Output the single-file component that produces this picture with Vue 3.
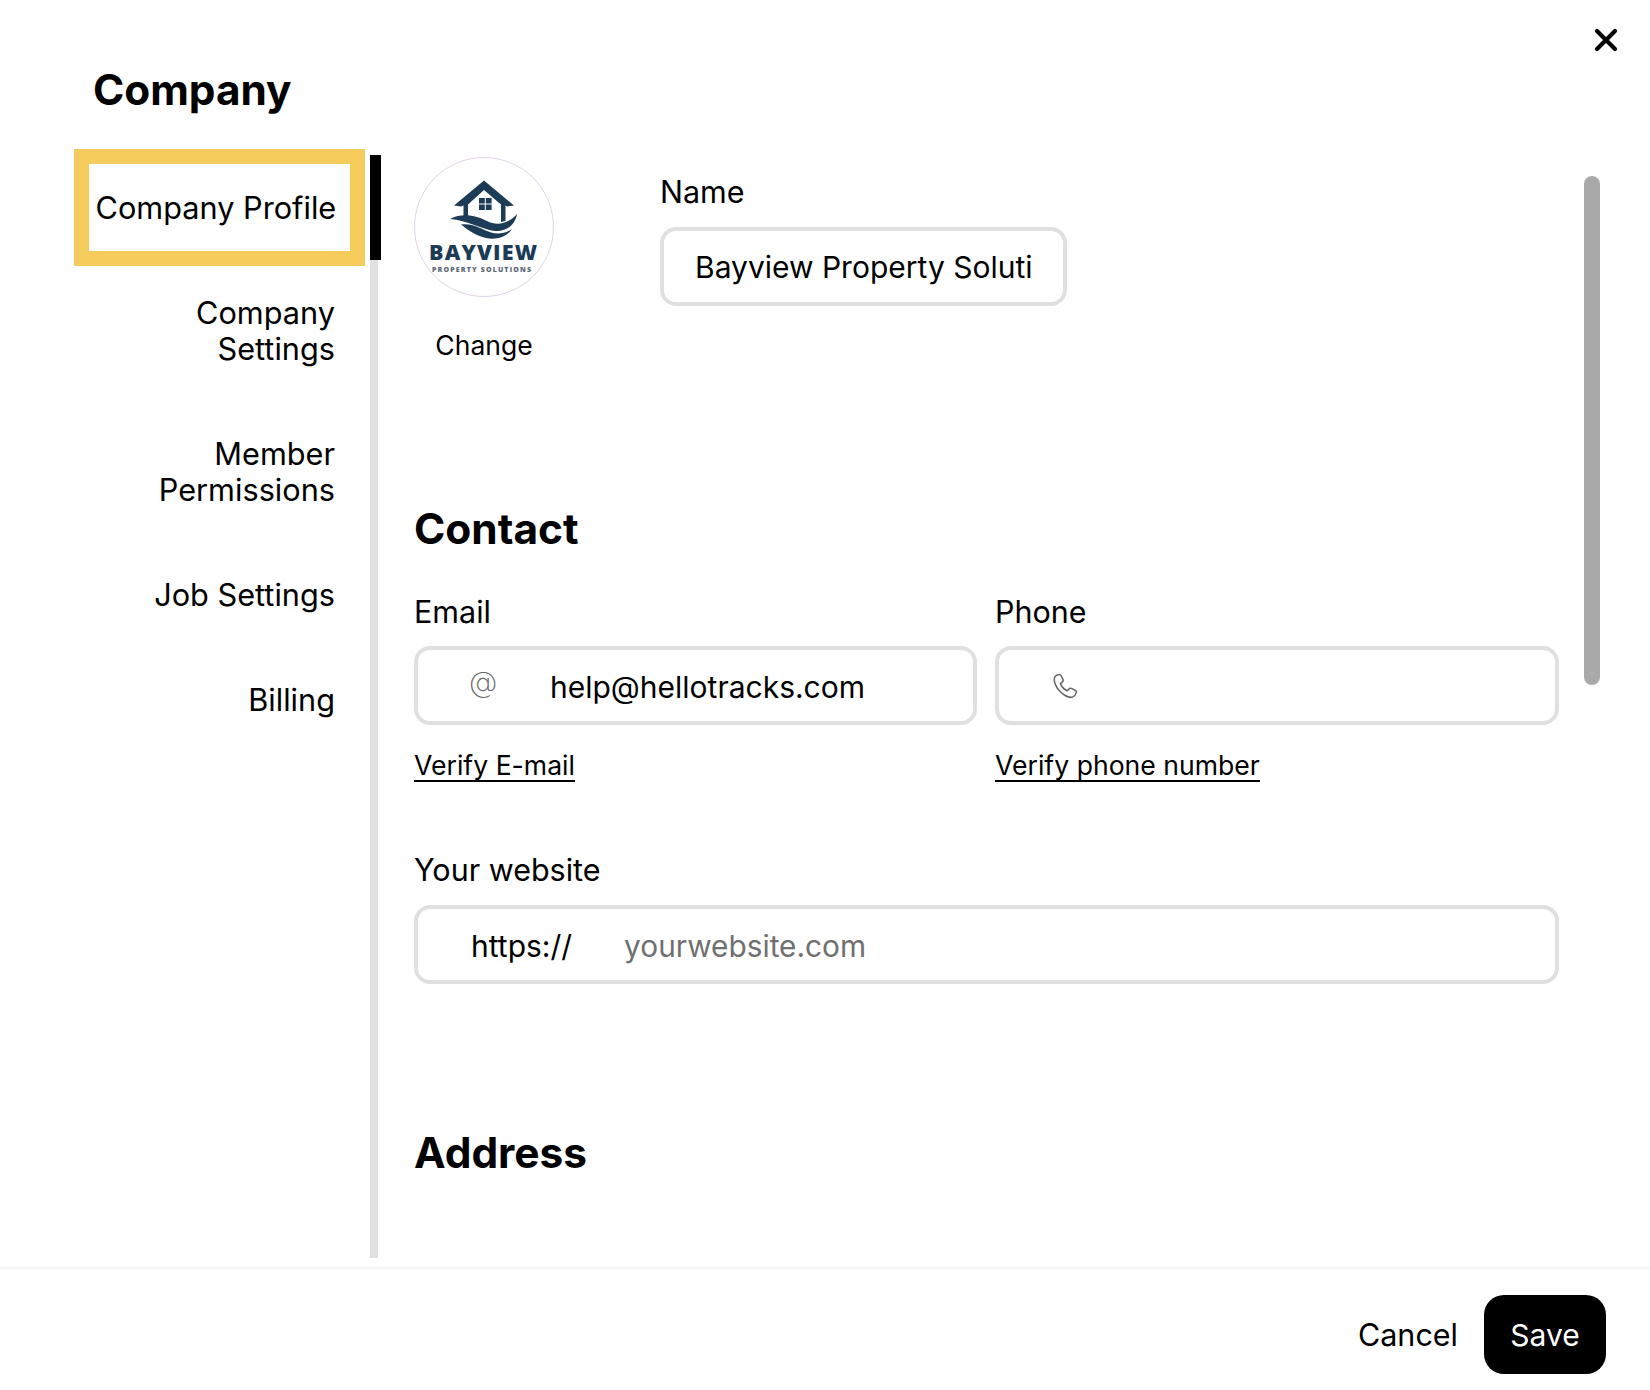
<script setup>
const navItems = [
  { label: 'Company Profile', active: true },
  { label: 'Company Settings' },
  { label: 'Member Permissions' },
  { label: 'Job Settings' },
  { label: 'Billing' }
]
</script>

<template>
  <div class="page">
    <button class="close" aria-label="Close">
      <svg width="24" height="24" viewBox="0 0 24 24"><path d="M3 3 L21 21 M21 3 L3 21" stroke="#000" stroke-width="4.2" stroke-linecap="round" fill="none" /></svg>
    </button>
    <header class="head"><h1 class="title">Company</h1></header>
    <div class="body">
      <nav class="nav">
        <div v-for="item in navItems" :key="item.label" class="nav-item" :class="{ active: item.active }">{{ item.label }}</div>
      </nav>
      <div class="rail"><div class="rail-thumb"></div></div>
      <main class="main">
        <section class="top">
          <div class="avatar-col">
            <div class="avatar">
              <svg width="138" height="138" viewBox="0 0 138 138">
                <g fill="#1c3b57">
                  <path d="M69 22.5 L99 47.5 L92 48.5 L90.5 47.5 L90.5 63 L86 64 L86 46.5 L69 32 L53 46.5 L53 62 L48.5 63 L48.5 47.5 L46 48.5 L39 47.5 Z" />
                  <rect x="64" y="40" width="5.8" height="5.5" /><rect x="70.8" y="40" width="5.8" height="5.5" />
                  <rect x="64" y="46.5" width="5.8" height="5.5" /><rect x="70.8" y="46.5" width="5.8" height="5.5" />
                  <path d="M35 61 C48 54 62 58 72 63 C82 68 93 66 102 56 C100 68 90 74 80 73 C68 72 52 62 35 61 Z" />
                  <path d="M46 66.5 C58 65 66 71 76 74.5 C83 76.5 90 75.5 97 71 C91 80 80 82 71 80 C61 78 53 72 46 66.5 Z" />
                  <text x="14" y="102" textLength="108" class="logo-main">BAYVIEW</text>
                </g>
                <text x="17" y="114" textLength="99" class="logo-sub">PROPERTY SOLUTIONS</text>
              </svg>
            </div>
            <div class="change">Change</div>
          </div>
          <div class="name-col">
            <div class="label">Name</div>
            <div class="field name-field">Bayview Property Soluti</div>
          </div>
        </section>

        <h2 class="section contact-title">Contact</h2>
        <div class="contact-grid">
          <div>
            <div class="label">Email</div>
            <div class="field icon-field">
              <span class="at">@</span>
              <span class="val val-shift">help@hellotracks.com</span>
            </div>
            <a class="link">Verify E-mail</a>
          </div>
          <div>
            <div class="label">Phone</div>
            <div class="field icon-field">
              <svg class="phone" width="26" height="26" viewBox="0 0 26 26" fill="none" stroke="#666" stroke-width="1.5" stroke-linejoin="round">
                <path d="M3 3.5 C4 2.5 6 1.6 7.5 1.6 C8.5 1.6 9 2.2 9.4 3 L11 6.6 C11.4 7.5 11.1 8.3 10.4 8.9 L8.4 10.6 C9.6 13.6 12.2 16.4 15.2 17.8 L17 15.9 C17.7 15.2 18.5 15 19.4 15.4 L23.2 17.2 C24.2 17.7 24.6 18.4 24.3 19.4 C23.8 21.2 22.7 23.1 20.8 23.9 C18.2 25 13.2 23.4 8.6 19 C3.4 14 1 7.5 3 3.5 Z" />
              </svg>
            </div>
            <a class="link">Verify phone number</a>
          </div>
        </div>

        <div class="label website-label">Your website</div>
        <div class="field website-field">
          <span class="prefix val-shift">https://</span>
          <span class="placeholder val-shift">yourwebsite.com</span>
        </div>

        <h2 class="section address-title">Address</h2>
      </main>
      <div class="scrollbar"></div>
    </div>
    <footer class="foot">
      <span class="cancel">Cancel</span>
      <button class="save">Save</button>
    </footer>
  </div>
</template>

<style>
html, body { margin: 0; background: #fff; }
</style>

<style scoped>
.page {
  position: relative;
  width: 1650px;
  height: 1390px;
  display: flex;
  flex-direction: column;
  background: #fff;
  color: #000;
  font-family: Inter, "Liberation Sans", sans-serif;
  font-size: 30px;
  line-height: 36px;
  overflow: hidden;
}
.close {
  position: absolute;
  top: 28px;
  left: 1594px;
  width: 24px;
  height: 24px;
  padding: 0;
  border: 0;
  background: none;
}
.close svg { display: block; }
.head {
  height: 155px;
  padding-left: 93px;
  box-sizing: border-box;
  flex: none;
}
.title {
  margin: 0;
  padding-top: 64px;
  font-size: 42.3px;
  line-height: 52px;
  font-weight: 700;
}
.body {
  position: relative;
  height: 1103px;
  flex: none;
  display: flex;
  padding-left: 80px;
}
.nav {
  width: 279px;
  flex: none;
  font-size: 30.7px;
}
.nav-item {
  box-sizing: border-box;
  padding: 34.6px 24px;
  text-align: right;
}
.nav-item.active {
  position: relative;
  z-index: 1;
  text-align: left;
  outline: 15px solid #f5cb5c;
  outline-offset: -9px;
  padding-left: 15.5px;
  padding-right: 0;
  white-space: nowrap;
}
.rail {
  position: relative;
  width: 8px;
  flex: none;
  margin-left: 11px;
  background: #e0e0e0;
}
.rail-thumb {
  position: absolute;
  top: 0;
  left: 0;
  width: 11px;
  height: 105px;
  background: #000;
}
.main {
  flex: none;
  width: 1145px;
  margin-left: 36px;
}
.top {
  display: flex;
  height: 348px;
}
.avatar-col {
  width: 140px;
  padding-top: 2px;
  flex: none;
}
.avatar {
  width: 138px;
  height: 138px;
  border: 1px solid #e2d3ea;
  border-radius: 50%;
  background: #fff;
}
.avatar svg { display: block; }
.logo-main {
  font-family: "Open Sans", sans-serif;
  font-weight: 800;
  font-size: 21.5px;
}
.logo-sub {
  font-family: "Open Sans", sans-serif;
  font-weight: 800;
  font-size: 7px;
  fill: #5b6875;
}
.change {
  margin-top: 31px;
  text-align: center;
  font-size: 26.5px;
  line-height: 34px;
}
.name-col {
  margin-left: 106px;
  padding-top: 19px;
}
.label {
  margin-bottom: 17px;
  font-size: 30.5px;
}
.contact-grid .label {
  margin-bottom: 16px;
}
.field {
  box-sizing: border-box;
  height: 79px;
  border: 4px solid #e0e0e0;
  border-radius: 16px;
  display: flex;
  align-items: center;
  white-space: nowrap;
  overflow: hidden;
}
.val-shift {
  position: relative;
  top: 1px;
}
.name-field {
  width: 407px;
  padding-left: 31px;
}
.section {
  margin: 0;
  font-size: 42.4px;
  line-height: 52px;
  font-weight: 700;
}
.contact-grid {
  display: grid;
  grid-template-columns: 563px 563px;
  column-gap: 19px;
  margin-top: 39px;
}
.contact-grid > div + div {
  margin-left: -1px;
}
.icon-field { position: relative; }
.at {
  position: absolute;
  left: 51px;
  top: 14px;
  font-size: 29px;
  font-weight: 200;
  color: #666;
}
.val { margin-left: 132px; }
.phone { margin-left: 53px; }
.link {
  display: inline-block;
  margin-top: 25px;
  font-size: 26.6px;
  line-height: 30px;
  border-bottom: 2px solid #000;
}
.website-label {
  margin-top: 70px;
}
.website-field { width: 1145px; }
.prefix { margin-left: 53px; }
.placeholder { margin-left: 52px; color: #707070; font-size: 29.8px; }
.address-title {
  margin-top: 143px;
}
.scrollbar {
  position: absolute;
  left: 1584px;
  top: 21px;
  width: 16px;
  height: 509px;
  border-radius: 8px;
  background: #a9a9a9;
}
.foot {
  box-sizing: border-box;
  flex: none;
  height: 132px;
  margin-top: 9px;
  border-top: 2px solid #f5f5f5;
  padding: 26px 44px 0 0;
  display: flex;
  justify-content: flex-end;
  align-items: flex-start;
  gap: 26px;
}
.cancel {
  line-height: 79px;
  font-size: 30.5px;
}
.save {
  box-sizing: border-box;
  width: 122px;
  height: 79px;
  border: 0;
  border-radius: 20px;
  background: #000;
  color: #fff;
  font: inherit;
  padding: 0;
}
</style>
